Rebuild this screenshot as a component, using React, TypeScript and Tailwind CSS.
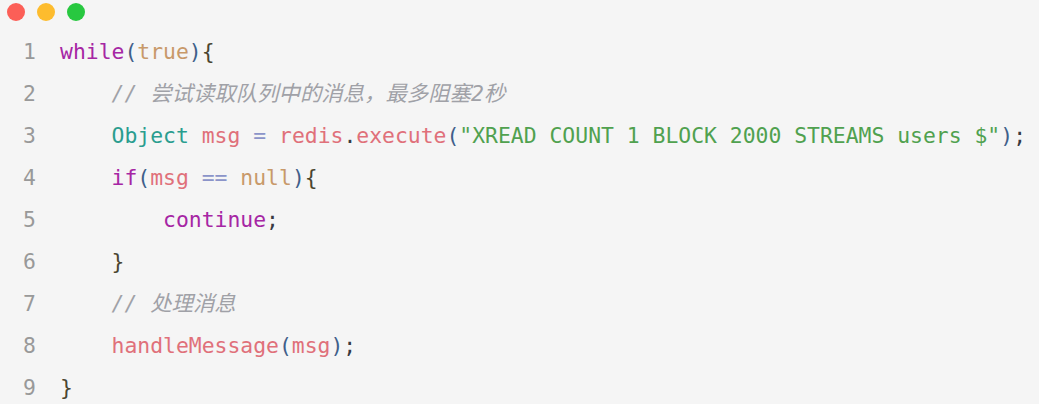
type Tok = [string, string];

const C = {
  kw: "text-[#a626a4]",
  lit: "text-[#c8996a]",
  cm: "text-[#a0a1a7] italic",
  type: "text-[#2a9d8f]",
  v: "text-[#e0707a]",
  op: "text-[#8b94c9]",
  p: "text-[#3f5f8a]",
  br: "text-[#4a4530]",
  str: "text-[#50a14f]",
  pl: "text-[#383a42]",
};

const lines: { indent: number; toks: Tok[] }[] = [
  { indent: 0, toks: [["while", C.kw], ["(", C.p], ["true", C.lit], [")", C.p], ["{", C.br]] },
  { indent: 4, toks: [["// 尝试读取队列中的消息，最多阻塞2秒", C.cm]] },
  {
    indent: 4,
    toks: [
      ["Object", C.type],
      [" ", C.pl],
      ["msg", C.v],
      [" ", C.pl],
      ["=", C.op],
      [" ", C.pl],
      ["redis", C.v],
      [".", C.pl],
      ["execute", C.v],
      ["(", C.p],
      ['"XREAD COUNT 1 BLOCK 2000 STREAMS users $"', C.str],
      [")", C.p],
      [";", C.pl],
    ],
  },
  {
    indent: 4,
    toks: [["if", C.kw], ["(", C.p], ["msg", C.v], [" ", C.pl], ["==", C.op], [" ", C.pl], ["null", C.lit], [")", C.p], ["{", C.br]],
  },
  { indent: 8, toks: [["continue", C.kw], [";", C.pl]] },
  { indent: 4, toks: [["}", C.br]] },
  { indent: 4, toks: [["// 处理消息", C.cm]] },
  { indent: 4, toks: [["handleMessage", C.v], ["(", C.p], ["msg", C.v], [")", C.p], [";", C.pl]] },
  { indent: 0, toks: [["}", C.br]] },
];

export default function App() {
  return (
    <div className="w-[1039px] h-[404px] bg-[#f5f5f5] overflow-hidden font-['DejaVu_Sans_Mono','Noto_Sans_CJK_SC',monospace]">
      <div className="flex gap-[12px] pl-[7px] pt-[3px] h-[26px]">
        <span className="w-[18px] h-[18px] rounded-full bg-[#fc5f57]" />
        <span className="w-[18px] h-[18px] rounded-full bg-[#fdbc2e]" />
        <span className="w-[18px] h-[18px] rounded-full bg-[#28c840]" />
      </div>
      <div className="pt-[5px]">
        {lines.map((l, i) => (
          <div key={i} className="flex h-[42px] items-center text-[21.4px] leading-none whitespace-pre">
            <span className="w-[60px] pl-[23px] text-[#999999]">{i + 1}</span>
            <span>
              {" ".repeat(l.indent)}
              {l.toks.map(([t, c], j) => (
                <span key={j} className={c}>
                  {t}
                </span>
              ))}
            </span>
          </div>
        ))}
      </div>
    </div>
  );
}
